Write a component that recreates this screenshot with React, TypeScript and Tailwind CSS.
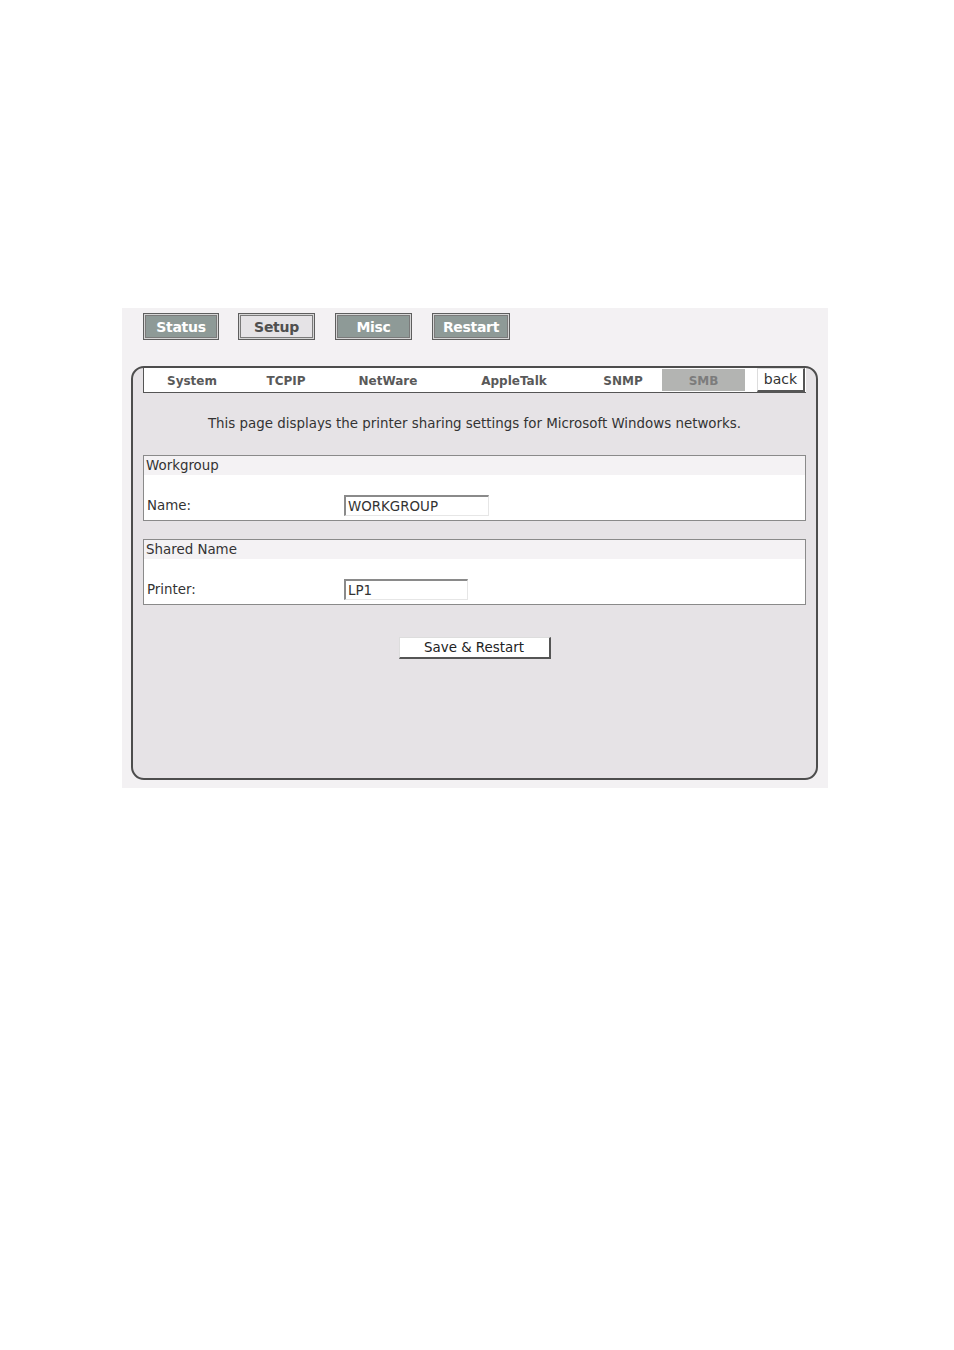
import React from "react";

const font = { fontFamily: '"DejaVu Sans", Verdana, sans-serif' };

function TopButton({ label, active }: { label: string; active?: boolean }) {
  return (
    <div className="border border-[#5e5e5e] bg-[#d6d6d6] p-[1px]">
      <div
        className={
          "h-[23px] pt-[2px] border border-[#7a7a7a] flex items-center justify-center text-[14px] font-bold tracking-[-0.3px] " +
          (active ? "bg-[#e5e3e6] text-[#4f4f4f]" : "bg-[#8e9a97] text-white")
        }
      >
        {label}
      </div>
    </div>
  );
}

function Tab({ label, w }: { label: string; w: string }) {
  return (
    <div className={w + " flex items-center justify-center pt-[1px] text-[12px] font-bold text-[#595959]"}>{label}</div>
  );
}

function Section({ title, label, value, inputW }: { title: string; label: string; value: string; inputW: string }) {
  return (
    <div className="border border-[#8a8a8a] bg-white">
      <div className="h-[19px] bg-[#f4f2f4] flex items-center pl-[2px] pt-[1px] text-[13.4px] text-[#333]">{title}</div>
      <div className="flex items-center pt-[20px] pb-[4px]">
        <div className="w-[200px] pl-[3px] pt-[1px] text-[13.4px] text-[#333]">{label}</div>
        <div
          className={
            inputW +
            " h-[21px] border-t-2 border-l-2 border-b border-r border-t-[#8a8a8a] border-l-[#8a8a8a] border-b-[#e6e6e6] border-r-[#e6e6e6] bg-white flex items-center pl-[2px] pt-[1px] text-[13.4px] text-[#333]"
          }
        >
          {value}
        </div>
      </div>
    </div>
  );
}

export default function App() {
  return (
    <div className="w-[954px] h-[1350px] bg-white" style={font}>
      <div className="pt-[308px] pl-[122px]">
        <div className="w-[706px] h-[480px] bg-[#f3f1f3] pt-[5px] pl-[9px]">
          <div className="flex pl-[12px]">
            <div className="w-[76px]"><TopButton label="Status" /></div>
            <div className="w-[77px] ml-[19px]"><TopButton label="Setup" active /></div>
            <div className="w-[77px] ml-[20px]"><TopButton label="Misc" /></div>
            <div className="w-[78px] ml-[20px]"><TopButton label="Restart" /></div>
          </div>
          <div className="mt-[26px] w-[687px] h-[414px] border-2 border-[#4d4d4d] rounded-[13px] bg-[#e6e3e6]">
            <div className="mx-[10px] h-[25px] bg-white border-l border-b border-[#555] flex">
              <Tab label="System" w="w-[96px]" />
              <Tab label="TCPIP" w="w-[92px]" />
              <Tab label="NetWare" w="w-[112px]" />
              <Tab label="AppleTalk" w="w-[140px]" />
              <Tab label="SNMP" w="w-[78px]" />
              <div className="w-[83px] my-[1px] bg-[#b3b4b2] flex items-center justify-center pt-[1px] text-[12px] font-bold text-[#7c7c7c]">
                SMB
              </div>
              <div className="w-[12px]" />
              <div className="w-[48px] border-r-2 border-b-2 border-t border-l border-r-[#555] border-b-[#555] border-t-[#ddd] border-l-[#ddd] bg-white flex items-center justify-center text-[14px] text-[#333]">
                back
              </div>
            </div>
            <div className="mt-[23px] text-center text-[13.4px] leading-[16px] text-[#333]">
              This page displays the printer sharing settings for Microsoft Windows networks.
            </div>
            <div className="mx-[10px] mt-[23px] flex flex-col gap-[18px]">
              <Section title="Workgroup" label="Name:" value="WORKGROUP" inputW="w-[145px]" />
              <Section title="Shared Name" label="Printer:" value="LP1" inputW="w-[124px]" />
            </div>
            <div className="mt-[32px] flex justify-center">
              <div className="w-[152px] h-[22px] bg-white border-t border-l border-r-2 border-b-2 border-t-[#ddd] border-l-[#ddd] border-r-[#555] border-b-[#555] flex items-center justify-center pt-[1px] text-[13.4px] text-[#222]">
                Save &amp; Restart
              </div>
            </div>
          </div>
        </div>
      </div>
    </div>
  );
}
